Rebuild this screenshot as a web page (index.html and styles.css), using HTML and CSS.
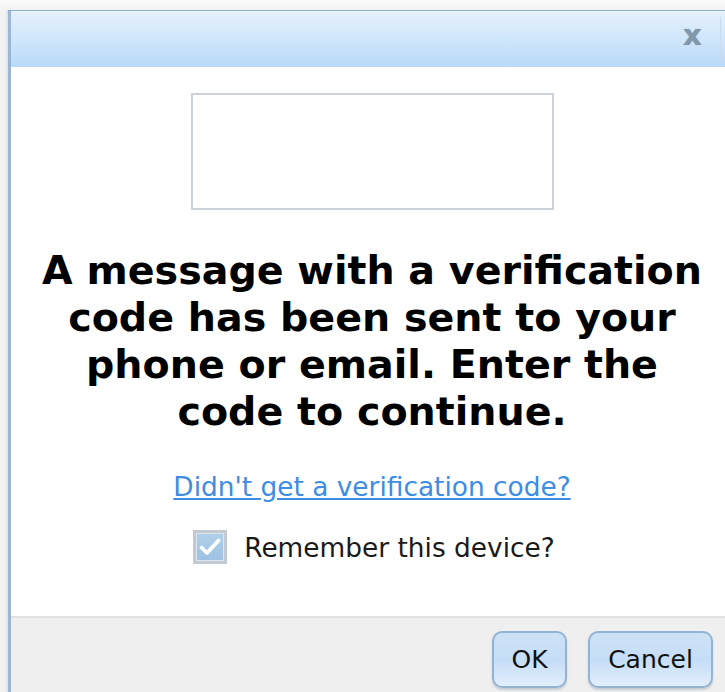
FILE: index.html
```html
<!DOCTYPE html>
<html lang="en">
<head>
<meta charset="utf-8">
<title>Verification</title>
<link rel="stylesheet" href="styles.css">
</head>
<body>
<div class="page">
  <div class="dialog">
    <div class="titlebar">
      <span class="close">x</span>
      <span class="divider"></span>
    </div>
    <div class="content">
      <div class="code-box"></div>
      <h1 class="message">A message with a verification code has been sent to your phone or email. Enter the code to continue.</h1>
      <a class="resend" href="#">Didn't get a verification code?</a>
      <label class="remember">
        <span class="check">
          <svg width="24" height="22" viewBox="0 0 24 22"><path d="M3.5 11.5 L9 17 L20.5 4.5" fill="none" stroke="#ffffff" stroke-width="3.8" stroke-linecap="round" stroke-linejoin="round"/></svg>
        </span>
        <span class="remember-text">Remember this device?</span>
      </label>
    </div>
    <div class="footer">
      <button class="btn btn-ok">OK</button>
      <button class="btn btn-cancel">Cancel</button>
    </div>
  </div>
</div>
</body>
</html>
```
FILE: styles.css
```css
html, body {
  margin: 0;
  padding: 0;
  overflow: hidden;
}

body {
  width: 725px;
  height: 692px;
  background: linear-gradient(#fbfbfb, #f1f1f1 12px);
  font-family: "DejaVu Sans", Verdana, sans-serif;
}

.page {
  padding: 10px 0 0 8px;
}

.dialog {
  width: 722px;
  border-left: 3px solid #9cb7d6;
  border-top: 1px solid #8eaaca;
  background: #ffffff;
  box-shadow: -2px 0 0 #e4e4e4;
}

.titlebar {
  position: relative;
  height: 55px;
  background: linear-gradient(#e4f0fc, #d2e7fb 45%, #b9d9f9);
  border-top: 1px solid #f0f7ff;
}

.close {
  position: absolute;
  left: 672px;
  top: 6px;
  font-weight: bold;
  font-size: 29px;
  color: #8197ab;
  text-shadow: 0 0 1px #8aa0b4;
}

.divider {
  position: absolute;
  left: 709px;
  top: 6px;
  width: 1px;
  height: 44px;
  background: #c9dcef;
}

.content {
  display: flex;
  flex-direction: column;
  align-items: center;
  height: 551px;
  box-sizing: border-box;
  padding-top: 26px;
  border-bottom: 2px solid #e1e1e1;
}

.code-box {
  width: 363px;
  height: 117px;
  box-sizing: border-box;
  border: 2px solid #cdd1d8;
}

.message {
  margin: 37px 0 0;
  font-size: 39.6px;
  line-height: 47px;
  font-weight: bold;
  text-align: center;
  color: #000000;
  width: 672px;
}

.resend {
  margin-top: 37px;
  font-size: 26.4px;
  line-height: 30px;
  color: #3d8de2;
  text-decoration: underline;
}

.remember {
  margin-top: 28px;
  display: flex;
  align-items: center;
  gap: 17px;
  margin-left: 4px;
}

.check {
  width: 34px;
  height: 34px;
  box-sizing: border-box;
  border: 3px solid #c3c9d0;
  background: linear-gradient(#b1cfea, #9dc1e2);
  box-shadow: inset 0 0 0 1px #dbe6f0;
  display: flex;
  align-items: center;
  justify-content: center;
}

.remember-text {
  font-size: 26.4px;
  color: #1a1a1a;
}

.footer {
  height: 76px;
  background: #efefef;
  display: flex;
  justify-content: flex-end;
  align-items: flex-start;
  gap: 21px;
  padding: 13px 20px 0 0;
  box-sizing: border-box;
}

.btn {
  height: 57px;
  border: 2px solid #93b3d3;
  border-radius: 10px;
  background: linear-gradient(#cde2f7, #c5ddf6 50%, #e2eefb);
  box-shadow: 0 2px 2px rgba(120, 140, 160, 0.35);
  font-family: "DejaVu Sans", Verdana, sans-serif;
  font-size: 25px;
  color: #111111;
  padding: 0;
}

.btn-ok {
  width: 75px;
}

.btn-cancel {
  width: 125px;
}
```
